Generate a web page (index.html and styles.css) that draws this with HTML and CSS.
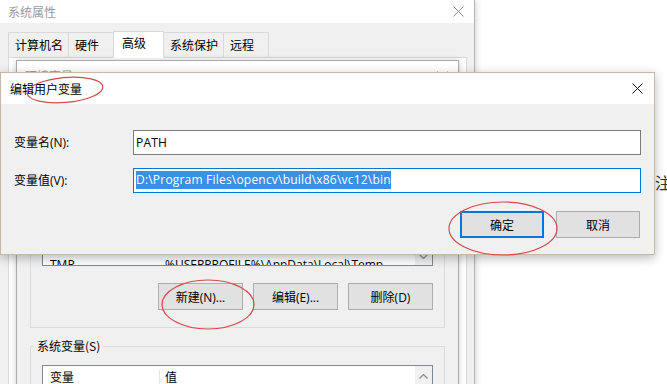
FILE: index.html
```html
<!DOCTYPE html>
<html lang="zh-CN">

<head>
    <meta charset="UTF-8">
    <meta name="viewport" content="width=device-width, initial-scale=1.0">
    <title>编辑用户变量</title>
    <link rel="stylesheet" href="styles.css">
</head>

<body>
    <div class="desktop">
        <!-- текст страницы за окнами -->
        <div class="page-text">注</div>

        <div class="window sys-window">
            <div class="titlebar">
                <span class="title">系统属性</span>
                <svg class="close" width="11" height="11" viewBox="0 0 11 11">
                    <path d="M0.5 0.5 L10.5 10.5 M10.5 0.5 L0.5 10.5" stroke="#8a8a8a" stroke-width="1" fill="none" />
                </svg>
            </div>
            <div class="tabs">
                <div class="tab">计算机名</div>
                <div class="tab">硬件</div>
                <div class="tab active">高级</div>
                <div class="tab">系统保护</div>
                <div class="tab">远程</div>
            </div>
            <div class="tab-panel"></div>
        </div>

        <div class="window env-window">
            <div class="titlebar">
                <span class="title">环境变量</span>
                <svg class="close" width="11" height="11" viewBox="0 0 11 11">
                    <path d="M0.5 0.5 L10.5 10.5 M10.5 0.5 L0.5 10.5" stroke="#8a8a8a" stroke-width="1" fill="none" />
                </svg>
            </div>
            <div class="env-body">
                <fieldset class="group">
                    <legend>Admin 的用户变量(U)</legend>
                    <div class="list user-list">
                        <div class="list-main">
                            <div class="list-head">
                                <div class="col-name">变量</div>
                                <div class="col-value">值</div>
                            </div>
                            <div class="list-row"><div class="col-name">MOZ_PLUGIN_PATH</div><div class="col-value">C:\Program Files\Foxit Software\plugins\</div></div>
                            <div class="list-row"><div class="col-name">OneDrive</div><div class="col-value">C:\Users\Admin\OneDrive</div></div>
                            <div class="list-row"><div class="col-name">OPENCV</div><div class="col-value">D:\Program Files\opencv\build</div></div>
                            <div class="list-row"><div class="col-name">Path</div><div class="col-value">D:\Program Files\opencv\build\x86\vc12\bin</div></div>
                            <div class="list-row"><div class="col-name">PyCharm</div><div class="col-value">C:\Program Files\JetBrains\PyCharm\bin;</div></div>
                            <div class="list-row"><div class="col-name">TEMP</div><div class="col-value">%USERPROFILE%\AppData\Local\Temp</div></div>
                            <div class="list-row"><div class="col-name">TMP</div><div class="col-value">%USERPROFILE%\AppData\Local\Temp</div></div>
                        </div>
                        <div class="scrollbar down">
                            <svg width="9" height="5" viewBox="0 0 9 5"><path d="M0.5 0.5 L4.5 4.5 L8.5 0.5" stroke="#8c8c8c" stroke-width="1.2" fill="none" /></svg>
                        </div>
                    </div>
                    <div class="button-row">
                        <button class="btn">新建(N)...</button>
                        <button class="btn">编辑(E)...</button>
                        <button class="btn">删除(D)</button>
                    </div>
                </fieldset>

                <fieldset class="group system">
                    <legend>系统变量(S)</legend>
                    <div class="list">
                        <div class="list-main">
                            <div class="list-head">
                                <div class="col-name">变量</div>
                                <div class="col-value">值</div>
                            </div>
                            <div class="list-row"><div class="col-name">ComSpec</div><div class="col-value">C:\Windows\system32\cmd.exe</div></div>
                        </div>
                        <div class="scrollbar up">
                            <svg width="9" height="5" viewBox="0 0 9 5"><path d="M0.5 4.5 L4.5 0.5 L8.5 4.5" stroke="#8c8c8c" stroke-width="1.2" fill="none" /></svg>
                        </div>
                    </div>
                </fieldset>
            </div>
        </div>

        <div class="window edit-dialog">
            <div class="titlebar">
                <span class="title">编辑用户变量</span>
                <svg class="close" width="11" height="11" viewBox="0 0 11 11">
                    <path d="M0.5 0.5 L10.5 10.5 M10.5 0.5 L0.5 10.5" stroke="#111" stroke-width="1" fill="none" />
                </svg>
            </div>
            <div class="edit-body">
                <div class="form-grid">
                    <label class="field-label">变量名(N):</label>
                    <div class="field">PATH</div>
                    <label class="field-label">变量值(V):</label>
                    <div class="field focused"><span class="selected">D:\Program Files\opencv\build\x86\vc12\bin</span></div>
                </div>
                <div class="dialog-buttons">
                    <button class="btn default">确定</button>
                    <button class="btn">取消</button>
                </div>
            </div>
        </div>

        <!-- красные пометки поверх скриншота -->
        <svg class="marks" width="667" height="384" viewBox="0 0 667 384">
            <ellipse cx="65" cy="90" rx="38" ry="12.5" transform="rotate(-5 65 90)" />
            <ellipse cx="503" cy="228.5" rx="54" ry="26.5" />
            <ellipse cx="208" cy="304.5" rx="46" ry="24.5" />
        </svg>
    </div>
</body>

</html>
```

FILE: styles.css
```css
* {
    box-sizing: border-box;
}

html,
body {
    margin: 0;
    padding: 0;
}

body {
    background-color: #fff;
    font-family: 'Open Sans', 'Noto Sans CJK SC', sans-serif;
    font-size: 12px;
    line-height: 16px;
    color: #000;
}

.desktop {
    position: relative;
    width: 667px;
    height: 384px;
    overflow: hidden;
}

.page-text {
    position: absolute;
    left: 655px;
    top: 174px;
    font-family: 'Noto Sans CJK SC', sans-serif;
    font-size: 16px;
    color: #333;
}

.window {
    position: absolute;
    background-color: #f0f0f0;
}

.titlebar {
    display: flex;
    align-items: center;
    justify-content: space-between;
    background-color: #fff;
}

.titlebar .title {
    font-family: 'Noto Sans CJK SC', sans-serif;
    color: #9a9a9a;
}

/* системные свойства */
.sys-window {
    left: 0;
    top: 0;
    width: 475px;
    height: 420px;
    border-right: 1px solid #b4b4b4;
    box-shadow: 1px 0 6px rgba(0, 0, 0, 0.18);
}

.sys-window .titlebar {
    height: 23px;
    padding: 0 10px 0 8px;
}

.tabs {
    display: flex;
    align-items: flex-end;
    height: 34px;
    padding-left: 8px;
}

.tab {
    height: 25px;
    min-width: 46px;
    margin-left: -1px;
    padding: 0 5px 0 6px;
    border: 1px solid #d9d9d9;
    border-bottom: none;
    background-color: #f0f0f0;
    line-height: 24px;
    font-family: 'Noto Sans CJK SC', sans-serif;
    color: #000;
}

.tab:first-child {
    margin-left: 0;
}

.tab.active {
    position: relative;
    z-index: 1;
    height: 27px;
    min-width: 51px;
    padding: 0 8px;
    background-color: #fff;
    line-height: 22px;
    margin-bottom: -1px;
}

.tab-panel {
    width: 459px;
    height: 360px;
    margin-left: 8px;
    background-color: #fff;
    border: 1px solid #d9d9d9;
}

/* окно переменных среды */
.env-window {
    left: 16px;
    top: 60px;
    width: 443px;
    height: 340px;
    border: 1px solid #aaa;
    box-shadow: 0 0 6px rgba(0, 0, 0, 0.2);
}

.env-window .titlebar {
    height: 30px;
    padding: 0 10px 0 8px;
}

.env-body {
    padding-top: 8px;
}

.group {
    margin: 0 13px;
    padding: 11px 11px 17px;
    border: 1px solid #dcdcdc;
    min-width: 0;
}

.group legend {
    margin-left: -8px;
    padding: 0 3px;
    line-height: 16px;
    font-family: 'Noto Sans CJK SC', sans-serif;
    color: #000;
}

.group.system {
    margin-top: 10px;
}

.list {
    display: flex;
    height: 140px;
    background-color: #fff;
    border: 1px solid #828790;
}

.list-main {
    flex: 1;
    overflow: hidden;
}

.list-head,
.list-row {
    display: flex;
    white-space: nowrap;
}

.list-head {
    height: 24px;
    align-items: center;
}

.list-row {
    height: 17.5px;
    align-items: center;
}

.col-name {
    width: 117px;
    padding-left: 7px;
    flex-shrink: 0;
}

.list-head .col-name {
    border-right: 1px solid #e5e5e5;
}

.col-value {
    padding-left: 5px;
}

.scrollbar {
    width: 17px;
    display: flex;
    justify-content: center;
    background-color: #f0f0f0;
}

.scrollbar.down {
    align-items: flex-end;
    padding-bottom: 6px;
}

.scrollbar.up {
    align-items: flex-start;
    padding-top: 8px;
}

.button-row {
    display: flex;
    justify-content: flex-end;
    gap: 10px;
    margin-top: 17px;
}

.btn {
    width: 85px;
    height: 27px;
    padding: 0;
    background-color: #e1e1e1;
    border: 1px solid #adadad;
    border-radius: 0;
    font-family: 'Open Sans', 'Noto Sans CJK SC', sans-serif;
    font-size: 12px;
    color: #000;
}

.btn.default {
    border: 2px solid #0078d7;
}

/* диалог редактирования */
.edit-dialog {
    left: 0;
    top: 72px;
    width: 655px;
    height: 183px;
    border: 1px solid #c9b7a6;
    box-shadow: 0 3px 10px rgba(0, 0, 0, 0.28);
}

.edit-dialog .titlebar {
    height: 31px;
    padding: 0 11px 0 9px;
}

.edit-dialog .titlebar .title {
    color: #000;
}

.edit-body {
    padding: 26px 13px 0 13px;
}

.form-grid {
    display: grid;
    grid-template-columns: 119px 1fr;
    row-gap: 13px;
    align-items: center;
}

.field-label {
    font-family: 'Open Sans', 'Noto Sans CJK SC', sans-serif;
}

.field {
    height: 25px;
    padding-left: 2px;
    background-color: #fff;
    border: 1px solid #7a7a7a;
    line-height: 23px;
    white-space: nowrap;
    letter-spacing: 0.2px;
}

.field.focused {
    border-color: #0078d7;
}

.selected {
    display: inline-block;
    line-height: 18px;
    vertical-align: 1px;
    background-color: #3a8fe8;
    color: #fff;
}

.dialog-buttons {
    display: flex;
    justify-content: flex-end;
    gap: 12px;
    margin-top: 18px;
    padding-right: 1px;
}

.dialog-buttons .btn {
    width: 84px;
}

.marks {
    position: absolute;
    left: 0;
    top: 0;
    pointer-events: none;
}

.marks ellipse {
    fill: none;
    stroke: #d24b4b;
    stroke-width: 1.2;
}
```
